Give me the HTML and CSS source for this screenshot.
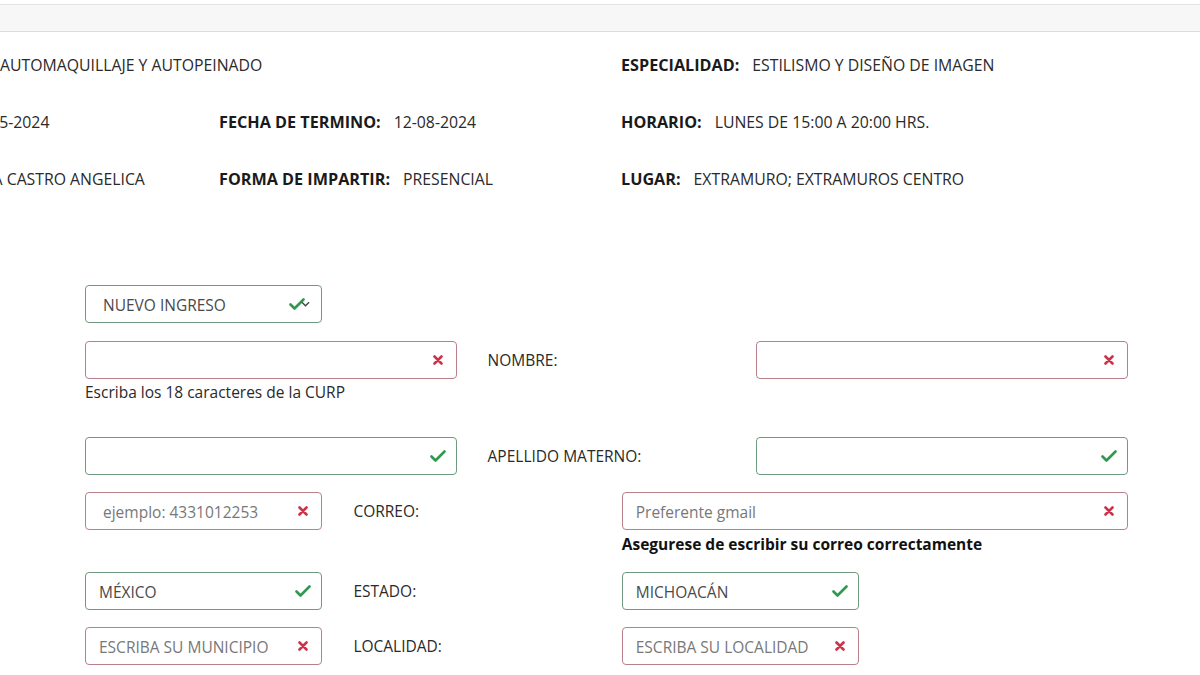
FILE: index.html
```html
<!DOCTYPE html>
<html lang="es">
<head>
<meta charset="utf-8">
<title>Inscripción</title>
<link rel="stylesheet" href="styles.css">
</head>
<body>
<div class="topbar"></div>

<section class="info">
  <div class="cell c1"><span class="val cut1">AUTOMAQUILLAJE Y AUTOPEINADO</span></div>
  <div class="cell c2"></div>
  <div class="cell c3"><b>ESPECIALIDAD:</b><span class="val">ESTILISMO Y DISEÑO DE IMAGEN</span></div>

  <div class="cell c1"><span class="val cut2">12-05-2024</span></div>
  <div class="cell c2"><b>FECHA DE TERMINO:</b><span class="val">12-08-2024</span></div>
  <div class="cell c3"><b>HORARIO:</b><span class="val">LUNES DE 15:00 A 20:00 HRS.</span></div>

  <div class="cell c1"><span class="val cut3">GARCIA CASTRO ANGELICA</span></div>
  <div class="cell c2"><b>FORMA DE IMPARTIR:</b><span class="val">PRESENCIAL</span></div>
  <div class="cell c3"><b>LUGAR:</b><span class="val">EXTRAMURO; EXTRAMUROS CENTRO</span></div>
</section>

<form class="form">
  <div class="row row-a">
    <div class="field select valid span2">
      <span class="ftext value sel">NUEVO INGRESO</span>
      <svg class="ico chk" viewBox="0 0 16 12"><polyline points="1.5,6.5 5.5,10.5 14.5,1.5"/></svg>
      <svg class="ico chev" viewBox="0 0 10 6"><polyline points="1,1 5,5 9,1"/></svg>
    </div>
  </div>

  <div class="row row-b">
    <div class="cellwrap span3">
      <div class="field invalid">
        <span class="ftext"></span>
        <svg class="ico x" viewBox="0 0 10 10"><path d="M1.5 1.5 8.5 8.5M8.5 1.5 1.5 8.5"/></svg>
      </div>
      <div class="help">Escriba los 18 caracteres de la CURP</div>
    </div>
    <div class="label col4">NOMBRE:</div>
    <div class="field invalid col6 span3">
      <span class="ftext"></span>
      <svg class="ico x" viewBox="0 0 10 10"><path d="M1.5 1.5 8.5 8.5M8.5 1.5 1.5 8.5"/></svg>
    </div>
  </div>

  <div class="row row-c">
    <div class="field valid span3">
      <span class="ftext"></span>
      <svg class="ico chk" viewBox="0 0 16 12"><polyline points="1.5,6.5 5.5,10.5 14.5,1.5"/></svg>
    </div>
    <div class="label col4">APELLIDO MATERNO:</div>
    <div class="field valid col6 span3">
      <span class="ftext"></span>
      <svg class="ico chk" viewBox="0 0 16 12"><polyline points="1.5,6.5 5.5,10.5 14.5,1.5"/></svg>
    </div>
  </div>

  <div class="row row-d">
    <div class="field invalid span2">
      <span class="ftext ph tel">ejemplo: 4331012253</span>
      <svg class="ico x" viewBox="0 0 10 10"><path d="M1.5 1.5 8.5 8.5M8.5 1.5 1.5 8.5"/></svg>
    </div>
    <div class="label col3">CORREO:</div>
    <div class="cellwrap col5 span4">
      <div class="field invalid">
        <span class="ftext ph">Preferente gmail</span>
        <svg class="ico x" viewBox="0 0 10 10"><path d="M1.5 1.5 8.5 8.5M8.5 1.5 1.5 8.5"/></svg>
      </div>
      <div class="help strong">Asegurese de escribir su correo correctamente</div>
    </div>
  </div>

  <div class="row row-e">
    <div class="field valid span2">
      <span class="ftext value">MÉXICO</span>
      <svg class="ico chk" viewBox="0 0 16 12"><polyline points="1.5,6.5 5.5,10.5 14.5,1.5"/></svg>
    </div>
    <div class="label col3">ESTADO:</div>
    <div class="field valid col5 span2">
      <span class="ftext value">MICHOACÁN</span>
      <svg class="ico chk" viewBox="0 0 16 12"><polyline points="1.5,6.5 5.5,10.5 14.5,1.5"/></svg>
    </div>
  </div>

  <div class="row row-f">
    <div class="field invalid span2">
      <span class="ftext ph">ESCRIBA SU MUNICIPIO</span>
      <svg class="ico x" viewBox="0 0 10 10"><path d="M1.5 1.5 8.5 8.5M8.5 1.5 1.5 8.5"/></svg>
    </div>
    <div class="label col3">LOCALIDAD:</div>
    <div class="field invalid col5 span2">
      <span class="ftext ph">ESCRIBA SU LOCALIDAD</span>
      <svg class="ico x" viewBox="0 0 10 10"><path d="M1.5 1.5 8.5 8.5M8.5 1.5 1.5 8.5"/></svg>
    </div>
  </div>
</form>
</body>
</html>
```
FILE: styles.css
```css
* { box-sizing: border-box; }
html, body { margin: 0; padding: 0; }
body {
  width: 1200px;
  height: 675px;
  overflow: hidden;
  background: #ffffff;
  font-family: "Open Sans", "Noto Sans", sans-serif;
  font-size: 15.5px;
  color: #222;
}

.topbar {
  margin-top: 4px;
  height: 28px;
  background: #f7f7f7;
  border-top: 1px solid #e2e2e2;
  border-bottom: 1px solid #dcdcdc;
}

/* info block */
.info {
  display: grid;
  grid-template-columns: 219px 402px 1fr;
  row-gap: 35px;
  padding-top: 22px;
  line-height: 22px;
  white-space: nowrap;
  font-size: 15.8px;
}
.cell b { font-weight: 700; font-size: 16.2px; color: #1a1a1a; margin-right: 13px; }
.val { color: #2a2a2a; display: inline-block; }
.cut1 { margin-left: 0; }
.cut2 { margin-left: -33px; }
.cut3 { margin-left: -53px; }

/* form */
.form {
  margin-top: 95px;
  margin-left: 85px;
  display: flex;
  flex-direction: column;
}
.row {
  display: grid;
  grid-template-columns: repeat(8, 103.3px);
  column-gap: 30.9px;
  align-items: start;
}
.row-b { margin-top: 18px; }
.row-c { margin-top: 35px; }
.row-d { margin-top: 17px; }
.row-e { margin-top: 18px; }
.row-f { margin-top: 17px; }

.span2 { grid-column-end: span 2; }
.span3 { grid-column-end: span 3; }
.span4 { grid-column-end: span 4; }
.col3 { grid-column-start: 3; }
.col4 { grid-column-start: 4; }
.col5 { grid-column-start: 5; }
.col6 { grid-column-start: 6; }
.col6.span3 { grid-column: 6 / span 3; }
.col5.span4 { grid-column: 5 / span 4; }
.col5.span2 { grid-column: 5 / span 2; }

.field {
  height: 38px;
  border: 1px solid #888;
  border-radius: 4px;
  display: flex;
  align-items: center;
  padding: 0 13px;
  background: #fff;
}
.field.valid { border-color: #6f9a7f; }
.field.invalid { border-color: #b98089; }

.ftext {
  flex: 1;
  line-height: 22px;
  white-space: nowrap;
  overflow: hidden;
  padding-top: 2px;
}
.ftext.ph { color: #787878; }
.ftext.value { color: #4a4a4a; }
.ftext.sel { padding-left: 4px; }
.ftext.tel { padding-left: 4px; }

.ico { flex: none; fill: none; }
.chk { width: 16px; height: 12px; margin-right: -3px; stroke: #2f9a4f; stroke-width: 2.6; stroke-linecap: round; stroke-linejoin: round; }
.x { width: 10px; height: 10px; margin-right: 0; stroke: #cc3348; stroke-width: 2.6; stroke-linecap: round; }
.select .chk { margin-right: -4px; }
.chev { width: 9px; height: 6px; stroke: #444; stroke-width: 1.5; margin-right: -2px; }

.label {
  height: 38px;
  display: flex;
  align-items: center;
  white-space: nowrap;
  color: #2a2a2a;
}

.help {
  margin-top: 3px;
  line-height: 20px;
  color: #2a2a2a;
  white-space: nowrap;
}
.help.strong { margin-top: 4px; font-weight: 700; color: #111; }
```
